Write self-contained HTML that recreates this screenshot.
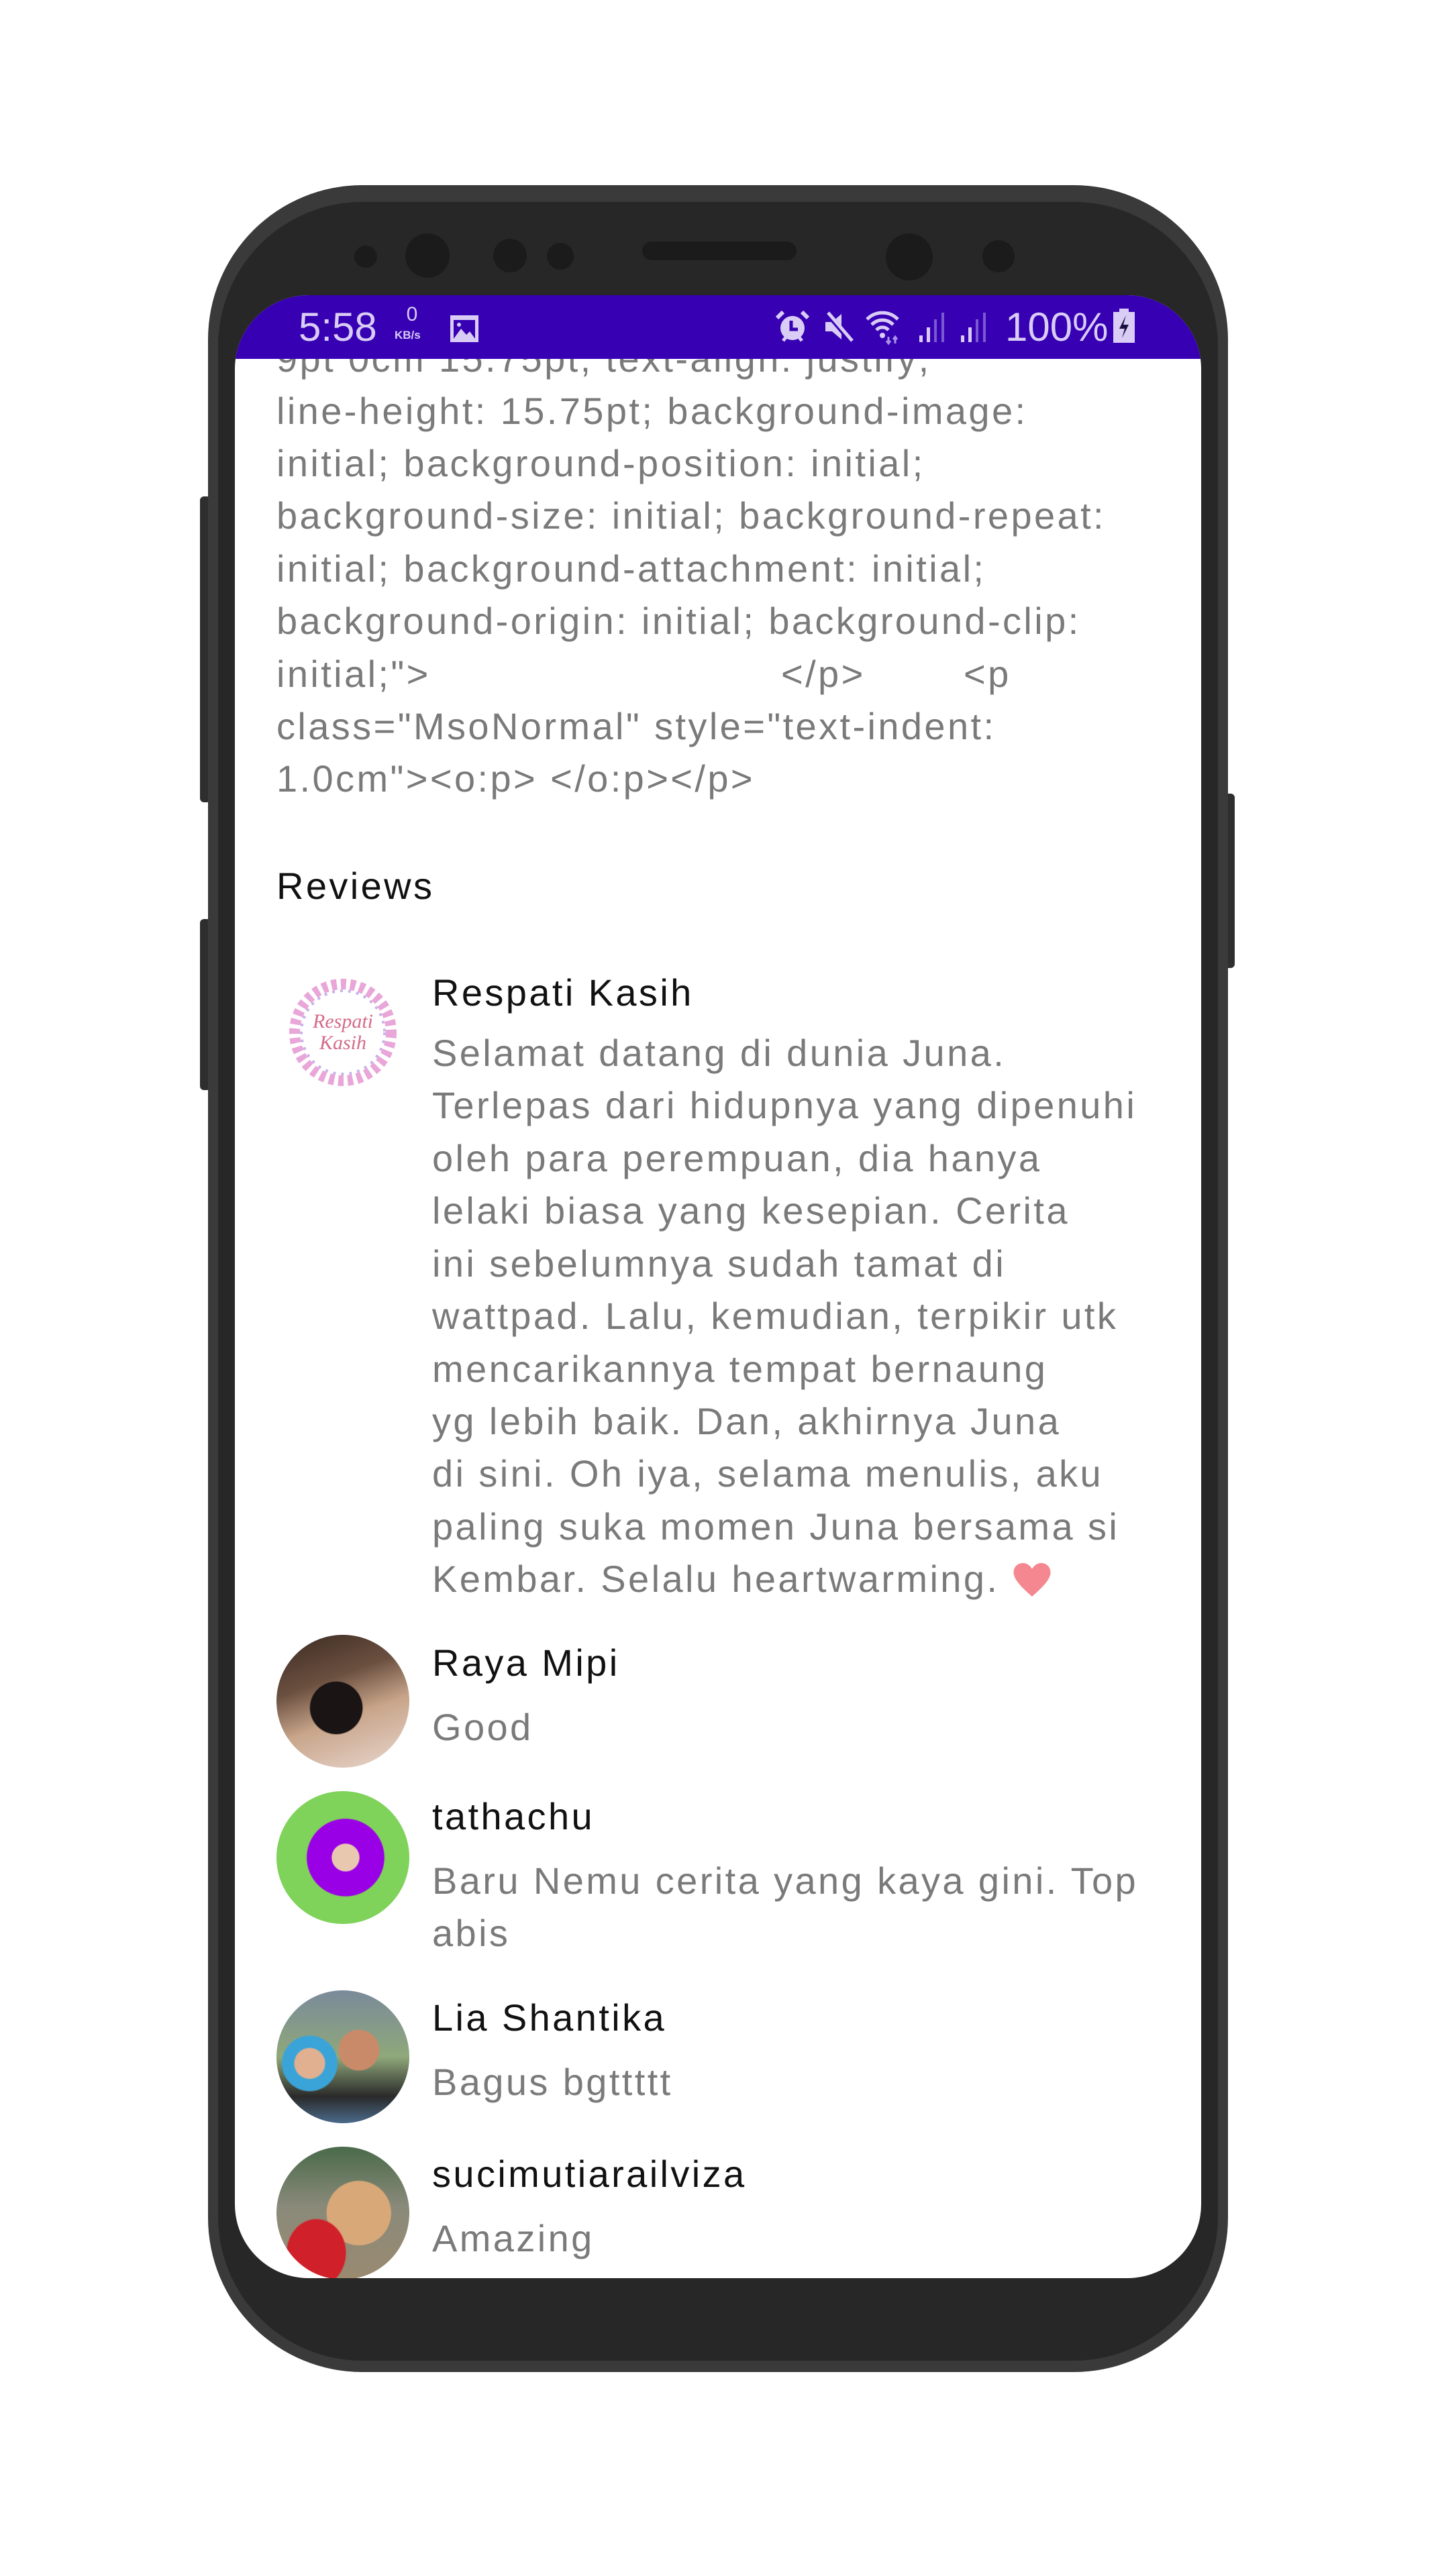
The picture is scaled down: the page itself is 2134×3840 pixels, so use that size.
<!DOCTYPE html>
<html><head><meta charset="utf-8"><style>
*{margin:0;padding:0;box-sizing:border-box}
body{width:2134px;height:3840px;background:#fff;position:relative;overflow:hidden;font-family:"Liberation Sans",sans-serif}
.abs{position:absolute}
.phone{left:310px;top:276px;width:1520px;height:3260px;background:#3a3a3a;border-radius:230px}
.bezel{left:325px;top:301px;width:1490px;height:3218px;background:#272727;border-radius:215px}
.screen{left:350px;top:440px;width:1440px;height:2956px;background:#fff;border-radius:110px 110px 110px 110px;overflow:hidden}
.sb{left:0;top:0;width:1440px;height:95px;background:#3700b3;z-index:2}
.dot{background:#1b1b1b;border-radius:50%}
.t{position:absolute;white-space:nowrap;font-size:56px;letter-spacing:3.4px;color:#7a7a7a;line-height:78px}
.n{color:#111}
.btn{background:#2e2e2e;border-radius:6px}
.av{position:absolute;width:198px;height:198px;border-radius:50%;overflow:hidden}
.st{color:#d9cdf6;font-size:60px;z-index:3}
svg.abs{z-index:3}
</style></head><body>
<div class="abs btn" style="left:298px;top:740px;width:16px;height:456px"></div>
<div class="abs btn" style="left:298px;top:1370px;width:16px;height:255px"></div>
<div class="abs btn" style="left:1824px;top:1183px;width:16px;height:260px"></div>
<div class="abs phone"></div>
<div class="abs bezel"></div>
<div class="abs dot" style="left:528px;top:366px;width:34px;height:33px"></div>
<div class="abs dot" style="left:604px;top:348px;width:66px;height:66px"></div>
<div class="abs dot" style="left:735px;top:356px;width:50px;height:50px"></div>
<div class="abs dot" style="left:815px;top:362px;width:40px;height:40px"></div>
<div class="abs" style="left:957px;top:360px;width:230px;height:28px;background:#1b1b1b;border-radius:14px"></div>
<div class="abs dot" style="left:1320px;top:348px;width:70px;height:70px"></div>
<div class="abs dot" style="left:1464px;top:358px;width:48px;height:48px"></div>

<div class="abs screen">
 <div class="abs sb"></div>
 <div class="t" style="left:62px;top:56px">9pt 0cm 15.75pt; text-align: justify;</div>
 <div class="t" style="left:62px;top:134px">line-height: 15.75pt; background-image:</div>
 <div class="t" style="left:62px;top:212px">initial; background-position: initial;</div>
 <div class="t" style="left:62px;top:290px">background-size: initial; background-repeat:</div>
 <div class="t" style="left:62px;top:369px">initial; background-attachment: initial;</div>
 <div class="t" style="left:62px;top:447px">background-origin: initial; background-clip:</div>
 <div class="t" style="left:62px;top:526px">initial;"&gt;</div>
 <div class="t" style="left:814px;top:526px">&lt;/p&gt;</div>
 <div class="t" style="left:1086px;top:526px">&lt;p</div>
 <div class="t" style="left:62px;top:604px">class="MsoNormal" style="text-indent:</div>
 <div class="t" style="left:62px;top:682px">1.0cm"&gt;&lt;o:p&gt; &lt;/o:p&gt;&lt;/p&gt;</div>
 <div class="t n" style="left:62px;top:842px">Reviews</div>

 <div class="av" style="left:62px;top:1000px;background:#fff">
  <svg width="198" height="198" viewBox="0 0 198 198">
   <circle cx="99" cy="99" r="72" fill="none" stroke="#e9a6d8" stroke-width="16" stroke-dasharray="8 6"/>
   <circle cx="99" cy="99" r="62" fill="none" stroke="#c9b3ea" stroke-width="4" stroke-dasharray="4 8"/>
   <text x="99" y="92" text-anchor="middle" font-family="Liberation Serif,serif" font-style="italic" font-size="30" fill="#d46b8a">Respati</text>
   <text x="99" y="124" text-anchor="middle" font-family="Liberation Serif,serif" font-style="italic" font-size="30" fill="#d46b8a">Kasih</text>
  </svg>
 </div>
 <div class="t n" style="left:294px;top:1001px">Respati Kasih</div>
 <div class="t" style="left:294px;top:1091px">Selamat datang di dunia Juna.</div>
 <div class="t" style="left:294px;top:1169px">Terlepas dari hidupnya yang dipenuhi</div>
 <div class="t" style="left:294px;top:1248px">oleh para perempuan, dia hanya</div>
 <div class="t" style="left:294px;top:1326px">lelaki biasa yang kesepian. Cerita</div>
 <div class="t" style="left:294px;top:1405px">ini sebelumnya sudah tamat di</div>
 <div class="t" style="left:294px;top:1483px">wattpad. Lalu, kemudian, terpikir utk</div>
 <div class="t" style="left:294px;top:1562px">mencarikannya tempat bernaung</div>
 <div class="t" style="left:294px;top:1640px">yg lebih baik. Dan, akhirnya Juna</div>
 <div class="t" style="left:294px;top:1718px">di sini. Oh iya, selama menulis, aku</div>
 <div class="t" style="left:294px;top:1797px">paling suka momen Juna bersama si</div>
 <div class="t" style="left:294px;top:1875px">Kembar. Selalu heartwarming. <svg width="60" height="56" viewBox="0 0 24 22" style="vertical-align:-10px"><path d="M12 21 C4 14 1 10 1 6.5 C1 3.3 3.5 1 6.5 1 C9 1 10.8 2.5 12 4.5 C13.2 2.5 15 1 17.5 1 C20.5 1 23 3.3 23 6.5 C23 10 20 14 12 21Z" fill="#f4878f"/></svg></div>

 <div class="av" style="left:62px;top:1997px;background:radial-gradient(circle at 45% 55%,#1a1414 0 25%,transparent 26%),linear-gradient(160deg,#3b2a22 0%,#6b5040 35%,#c8a58a 60%,#e9d7cf 100%)"></div>
 <div class="t n" style="left:294px;top:2000px">Raya Mipi</div>
 <div class="t" style="left:294px;top:2096px">Good</div>

 <div class="av" style="left:62px;top:2230px;background:radial-gradient(circle at 52% 50%,#e8c9b0 0 14%,#9a00e6 15% 40%,#7fd25a 41%)"></div>
 <div class="t n" style="left:294px;top:2229px">tathachu</div>
 <div class="t" style="left:294px;top:2325px">Baru Nemu cerita yang kaya gini. Top</div>
 <div class="t" style="left:294px;top:2403px">abis</div>

 <div class="av" style="left:62px;top:2527px;background:radial-gradient(circle at 62% 45%,#c98a6a 0 18%,transparent 19%),radial-gradient(circle at 25% 55%,#e0b090 0 12%,#3aa4d8 13% 22%,transparent 23%),linear-gradient(180deg,#7a8a9a 0%,#8fa87a 50%,#2a2a2a 80%,#4a6a8a 100%)"></div>
 <div class="t n" style="left:294px;top:2529px">Lia Shantika</div>
 <div class="t" style="left:294px;top:2625px">Bagus bgttttt</div>

 <div class="av" style="left:62px;top:2760px;background:radial-gradient(ellipse at 30% 80%,#d0202a 0 22%,transparent 23%),radial-gradient(circle at 62% 50%,#d8a878 0 30%,transparent 31%),linear-gradient(180deg,#4a6a4a 0%,#8a8a7a 45%,#9a8a70 100%)"></div>
 <div class="t n" style="left:294px;top:2762px">sucimutiarailviza</div>
 <div class="t" style="left:294px;top:2858px">Amazing</div>

 <div class="abs st" style="left:95px;top:13px;line-height:70px">5:58</div>
 <div class="abs" style="z-index:3;left:246px;top:14px;color:#d9cdf6;font-size:30px;line-height:30px;text-align:center;width:36px">0</div>
 <div class="abs" style="z-index:3;left:238px;top:50px;color:#d9cdf6;font-size:17px;font-weight:bold">KB/s</div>
 <svg class="abs" style="left:319px;top:28px" width="46" height="44" viewBox="0 0 46 44"><rect x="2" y="2" width="42" height="40" fill="#d9cdf6"/><rect x="7" y="9" width="32" height="28" fill="#3700b3"/><path d="M7 37 L18 22 L26 31 L31 26 L39 37Z" fill="#d9cdf6"/><circle cx="15" cy="16" r="3" fill="#d9cdf6"/></svg>
 <svg class="abs" style="left:805px;top:22px" width="52" height="50" viewBox="0 0 52 50"><circle cx="26" cy="27" r="18" fill="#d9cdf6"/><path d="M3 12 L12 3 M49 12 L40 3" stroke="#d9cdf6" stroke-width="6"/><path d="M24 16 V29 H34" stroke="#3700b3" stroke-width="5" fill="none"/><path d="M12 46 l4-5 M40 46 l-4-5" stroke="#d9cdf6" stroke-width="5"/></svg>
 <svg class="abs" style="left:876px;top:22px" width="48" height="50" viewBox="0 0 48 50"><path d="M4 18 H14 L28 6 V44 L14 32 H4Z" fill="#d9cdf6"/><path d="M6 4 L42 46" stroke="#3700b3" stroke-width="8"/><path d="M8 4 L44 46" stroke="#d9cdf6" stroke-width="5"/></svg>
 <svg class="abs" style="left:938px;top:20px" width="60" height="55" viewBox="0 0 60 55"><path d="M4 16 A32 32 0 0 1 50 16 M11 24 A22 22 0 0 1 43 24 M18 32 A12 12 0 0 1 36 32" stroke="#d9cdf6" stroke-width="5" fill="none"/><circle cx="27" cy="40" r="4" fill="#d9cdf6"/><path d="M36 42 V52 M33 48 L36 52 L39 48 M46 52 V42 M43 46 L46 42 L49 46" stroke="#a990e8" stroke-width="3" fill="none"/></svg>
 <svg class="abs" style="left:1018px;top:24px" width="44" height="46" viewBox="0 0 44 46"><rect x="2" y="36" width="5" height="10" fill="#d9cdf6"/><rect x="13" y="24" width="5" height="22" fill="#d9cdf6"/><rect x="24" y="12" width="4" height="34" fill="#7a5ad0"/><rect x="35" y="2" width="4" height="44" fill="#7a5ad0"/></svg>
 <svg class="abs" style="left:1080px;top:24px" width="44" height="46" viewBox="0 0 44 46"><rect x="2" y="36" width="5" height="10" fill="#d9cdf6"/><rect x="13" y="24" width="5" height="22" fill="#d9cdf6"/><rect x="24" y="12" width="4" height="34" fill="#7a5ad0"/><rect x="35" y="2" width="4" height="44" fill="#7a5ad0"/></svg>
 <div class="abs st" style="left:1148px;top:13px;line-height:70px">100%</div>
 <svg class="abs" style="left:1308px;top:20px" width="34" height="52" viewBox="0 0 34 52"><rect x="10" y="0" width="14" height="6" fill="#d9cdf6"/><rect x="1" y="5" width="32" height="46" fill="#d9cdf6"/><path d="M20 10 L10 30 H18 L14 44 L24 24 H16Z" fill="#1a1040"/></svg>
</div>
</body></html>
